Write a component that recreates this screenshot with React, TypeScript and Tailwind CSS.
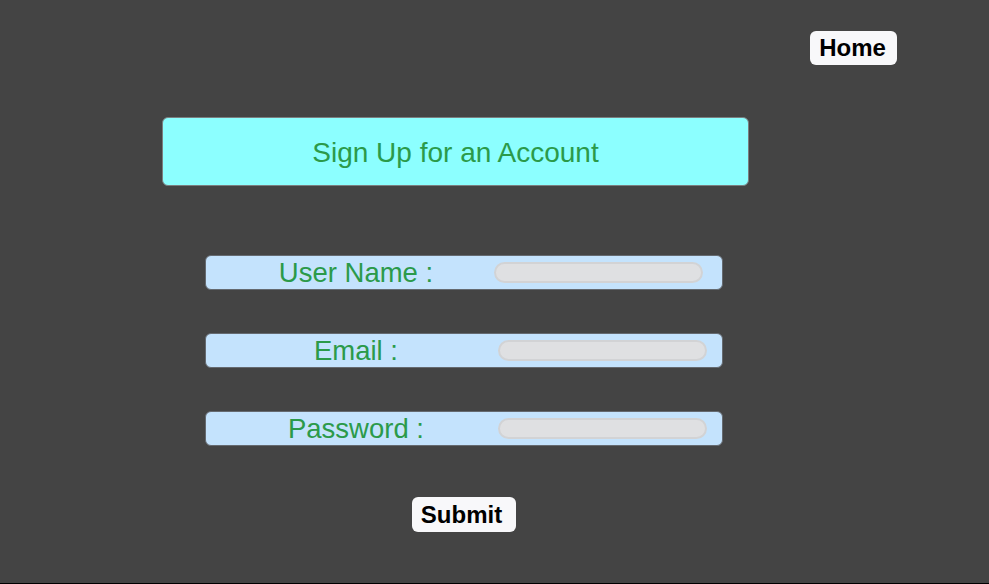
import React from "react";

const font = { fontFamily: '"Liberation Sans", Arial, Helvetica, sans-serif' };

function Row({ label, ml }: { label: string; ml: string }) {
  return (
    <div className="flex h-[35px] w-[518px] items-center rounded-[6px] border border-[#656a70] bg-[#c4e3fd]">
      <span className="ml-[18px] w-[264px] shrink-0 text-center text-[27.5px] leading-none text-[#2b9a4a]">
        {label}
      </span>
      <input
        className={`${ml} h-[21px] w-[209px] rounded-full border-2 border-[#d2d3d5] bg-[#dfe0e2] outline-none`}
      />
    </div>
  );
}

export default function App() {
  return (
    <div className="min-h-[584px] bg-black" style={font}>
      <div className="flex h-[583px] flex-col bg-[#444444]">
        <div className="flex justify-end pr-[92px] pt-[31px]">
          <button className="h-[34px] w-[87px] rounded-[6px] bg-[#f8f8fa] pr-[2px] text-[24px] font-bold leading-none text-black">
            Home
          </button>
        </div>
        <div className="ml-[162px] mt-[52px] flex h-[69px] w-[587px] items-center justify-center rounded-[6px] border border-[#7a7f80] bg-[#8cffff] pt-[2px] text-[28px] leading-none text-[#2b9a4a]">
          Sign Up for an Account
        </div>
        <div className="ml-[205px] mt-[69px] flex flex-col gap-[43px]">
          <Row label="User Name :" ml="ml-[6px]" />
          <Row label="Email :" ml="ml-[10px]" />
          <Row label="Password :" ml="ml-[10px]" />
        </div>
        <div className="ml-[412px] mt-[51px]">
          <button className="h-[35px] w-[104px] rounded-[6px] bg-[#f8f8fa] pr-[5px] text-[24px] font-bold leading-none text-black">
            Submit
          </button>
        </div>
      </div>
    </div>
  );
}
